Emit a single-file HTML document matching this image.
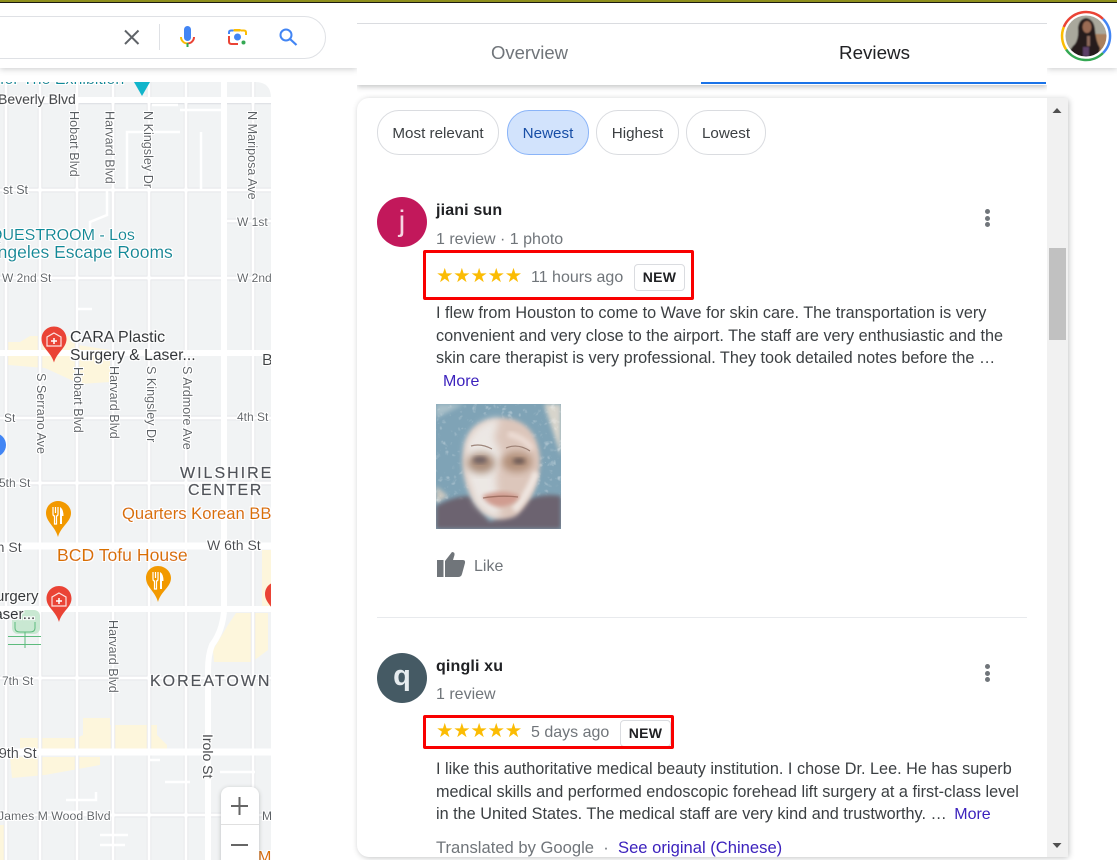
<!DOCTYPE html>
<html><head><meta charset="utf-8">
<style>
html,body{margin:0;padding:0;width:1117px;height:860px;overflow:hidden;background:#fff;font-family:"Liberation Sans",Arial,sans-serif}
#r{position:absolute;left:0;top:0;width:1117px;height:860px;overflow:hidden;background:#fff}
.a{position:absolute;white-space:nowrap}
.chip{position:absolute;top:110px;height:43px;line-height:45px;border:1px solid #dadce0;border-radius:22px;text-align:center;font-size:15.200px;color:#3c4043;background:#fff}
.t{position:absolute;left:436px;font-size:16px;color:#3c4043;white-space:nowrap;line-height:20px}
.g{color:#70757a}
.l{color:#3c22bd}
.st{color:#fbbc04}
.new{position:absolute;background:#fff;border:1px solid #dadce0;border-radius:4px;font-size:14px;font-weight:bold;color:#202124;text-align:center;letter-spacing:.3px}
.red{position:absolute;border:3.500px solid #f90000;border-radius:2px;box-sizing:border-box}
.dots i{position:absolute;left:0;width:5px;height:5px;border-radius:50%;background:#70757a}
svg text{font-family:"Liberation Sans",Arial,sans-serif}
</style></head><body><div id="r">

<!-- header shadow -->
<div class="a" style="left:0;top:0;width:357px;height:68px;background:#fff;box-shadow:0 1px 6px rgba(60,64,67,.28);clip-path:inset(0 0 -10px 0)"></div>
<div class="a" style="left:1047px;top:0;width:70px;height:68px;background:#fff;box-shadow:0 1px 6px rgba(60,64,67,.28);clip-path:inset(0 0 -10px 0)"></div>

<!-- search box -->
<div class="a" style="left:-30px;top:16px;width:354px;height:41px;border:1px solid #dfe1e5;border-radius:22px;background:#fff"></div>
<svg class="a" style="left:120px;top:24px" width="210" height="26" viewBox="120 24 210 26">
 <path d="M125 30.500 L138.500 44 M138.500 30.500 L125 44" stroke="#5f6368" stroke-width="2" fill="none"/>
 <rect x="159" y="24" width="1" height="26" fill="#dfe1e5"/>
 <rect x="184" y="26" width="7" height="15" rx="3.500" fill="#4285f4"/>
 <path d="M181 37 A6.500 6.500 0 0 0 187.500 43.500" stroke="#fbbc04" stroke-width="2" fill="none"/>
 <path d="M187.500 43.500 A6.500 6.500 0 0 0 194 37" stroke="#ea4335" stroke-width="2" fill="none"/>
 <rect x="186.500" y="43" width="2" height="4" fill="#34a853"/>
 <circle cx="237.500" cy="37" r="3.500" fill="#4285f4"/>
 <circle cx="243.500" cy="42.500" r="2" fill="#34a853"/>
 <path d="M229 34 V32.500 Q229 30.500 231 30.500 H233.500" stroke="#4285f4" stroke-width="2" fill="none"/>
 <path d="M241 30.500 H244 Q246 30.500 246 32.500 V35" stroke="#fbbc04" stroke-width="2" fill="none"/>
 <path d="M229 36 V41.500 Q229 44 231.500 44 H238" stroke="#ea4335" stroke-width="2" fill="none"/>
 <rect x="233.500" y="29" width="7.500" height="2.500" rx="1" fill="#fbbc04"/>
 <circle cx="286" cy="35" r="5.500" stroke="#4285f4" stroke-width="2" fill="none"/>
 <path d="M290 39 L296.500 45" stroke="#4285f4" stroke-width="2.200" fill="none"/>
</svg>

<!-- map -->
<svg class="a" style="left:0;top:82px" width="271" height="778" viewBox="0 82 271 778">
 <defs>
  <clipPath id="mc"><path d="M0 82 H255 Q271 82 271 98 V860 H0 Z"/></clipPath>
  <filter id="h" x="-20%" y="-20%" width="140%" height="140%"><feMorphology operator="dilate" radius="1" in="SourceAlpha" result="d"/><feFlood flood-color="#fff"/><feComposite in2="d" operator="in"/><feMerge><feMergeNode/><feMergeNode in="SourceGraphic"/></feMerge></filter>
 </defs>
 <g clip-path="url(#mc)">
  <rect x="0" y="82" width="271" height="778" fill="#f1f3f4"/>
  <!-- yellow areas -->
  <g fill="#fdf6dc">
   <path d="M8 342 H20 L30 336 H72 L78 345 L110 350 L110 382 L80 384 L45 368 L8 365 Z"/>
   <path d="M213 650 L228 625 L236 613 H268 V650 L252 662 H214 Z"/>
   <path d="M262 550 H271 V610 H262 Z"/>
   <path d="M83 718 H110 V725 H157 V735 L167 745 V752 H20 V738 L77 738 L83 735 Z"/>
   <path d="M10 757 H100 V765 L45 775 L12 778 Z"/>
   <path d="M0 825 H4 V860 H0 Z"/>
  </g>
  <!-- roads: minor -->
  <g stroke="#e0e2e6" stroke-width="4.400" fill="none">
   <path d="M40 82V860M77 82V860M113 82V860M149 82V860M186 82V860M253 82V860M6 82V860"/>
   <path d="M0 190H271M226 221H271M0 278H271M0 418H271M0 483H271M0 678H271M0 815H271M0 102H271"/>
  </g>
  <g stroke="#fff" stroke-width="3" fill="none">
   <path d="M40 82V860M77 82V860M113 82V860M149 82V860M186 82V860M253 82V860M6 82V860"/>
   <path d="M0 190H271M226 221H271M0 278H271M0 418H271M0 483H271M0 678H271M0 815H271"/>
  </g>
  <g stroke="#fff" stroke-width="2.500" fill="none">
   <path d="M127 190V132H180M201 132V190M180 110H225M152 105H178"/>
   <path d="M107 190V215L90 222V240M66 800H96V792M100 845H125M100 835H128M165 782H190M150 760H160M220 772H255M60 812H100M77 309H92"/>
  </g>
  <!-- major roads -->
  <g stroke="#fff" fill="none">
   <path d="M0 100H271" stroke-width="6"/>
   <path d="M0 353H271" stroke-width="6"/>
   <path d="M0 546H271" stroke-width="7"/>
   <path d="M0 609H271" stroke-width="6"/>
   <path d="M0 752H271" stroke-width="7"/>
   <path d="M224 82V612" stroke-width="6"/>
   <path d="M224 612Q222 632 212 645Q208 655 208 670V860" stroke-width="6"/>
  </g>
  <!-- park -->
  <rect x="12" y="610" width="28" height="24" rx="6" fill="#c9e8d2"/>
  <path d="M15 622 V628 Q15 632 20 632 H30 Q35 632 35 628 V622" stroke="#5dbb7d" fill="none"/>
  <path d="M8 636.500H41M8 644.500H41M25 632V648" stroke="#5dbb7d" fill="none"/>
  <!-- top marker -->
  <path d="M134 82H150L142 96Z" fill="#12b5cb"/>
  <!-- blue dot -->
  <circle cx="-6" cy="445" r="12" fill="#4285f4"/>
  <!-- text -->
  <g filter="url(#h)">
   <text x="0" y="84" font-size="16" fill="#0d8b99">for The Exhibition</text>
   <g fill="#5a5e63" font-size="12">
    <text x="-2" y="104" font-size="14" fill="#46494d" stroke="#46494d" stroke-width=".2">Beverly Blvd</text>
    <text x="3" y="194" font-size="12.500">st St</text>
    <text x="237" y="226">W 1st</text>
    <text x="237" y="282">W 2nd</text>
    <text x="2" y="282">W 2nd St</text>
    <text x="237" y="421">4th St</text>
    <text x="4" y="422">St</text>
    <text x="-1" y="487">5th St</text>
    <text x="2" y="685">7th St</text>
    <text x="-2" y="820" font-size="12.300">James M Wood Blvd</text>
    <text x="262" y="820">M</text>
   </g>
   <g fill="#5a5e63" font-size="12.600">
    <text transform="translate(70,111) rotate(90)">Hobart Blvd</text>
    <text transform="translate(105.500,111) rotate(90)">Harvard Blvd</text>
    <text transform="translate(144,111) rotate(90)">N Kingsley Dr</text>
    <text transform="translate(248,111) rotate(90)">N Mariposa Ave</text>
    <text transform="translate(37,373) rotate(90)">S Serrano Ave</text>
    <text transform="translate(74,367) rotate(90)">Hobart Blvd</text>
    <text transform="translate(110,366) rotate(90)">Harvard Blvd</text>
    <text transform="translate(147,366) rotate(90)">S Kingsley Dr</text>
    <text transform="translate(183,366) rotate(90)">S Ardmore Ave</text>
    <text transform="translate(109,620) rotate(90)">Harvard Blvd</text>
   </g>
   <text transform="translate(203,734) rotate(90)" font-size="14" fill="#46494d" stroke="#46494d" stroke-width=".15">Irolo St</text>
   <g fill="#0d8b99" font-size="16">
    <text x="-10" y="240">QUESTROOM - Los</text>
    <text x="-14" y="258" font-size="17.500">Angeles Escape Rooms</text>
   </g>
   <g fill="#333639" font-size="15.700" stroke="#333639" stroke-width=".15">
    <text x="70" y="342" font-size="16">CARA Plastic</text>
    <text x="70" y="360">Surgery &amp; Laser...</text>
    <text x="-14" y="601" font-size="15">Surgery</text>
    <text x="-14" y="619" font-size="15">Laser...</text>
   </g>
   <text x="262" y="365" font-size="16" fill="#3c4043">B</text>
   <g fill="#50535a" font-size="16" letter-spacing="2" stroke="#50535a" stroke-width=".3">
    <text x="180" y="478">WILSHIRE</text>
    <text x="188" y="495" letter-spacing="1.500">CENTER</text>
    <text x="150" y="686">KOREATOWN</text>
   </g>
   <g fill="#d97000" stroke="#d97000" stroke-width=".1">
    <text x="122" y="519" font-size="16.600">Quarters Korean BBQ</text>
    <text x="57" y="561" font-size="17.600">BCD Tofu House</text>
    <text x="258" y="862" font-size="16">M</text>
   </g>
   <g fill="#46494d" font-size="14">
    <text x="207" y="550">W 6th St</text>
    <text x="-15" y="552">6th St</text>
    <text x="-19" y="758" font-size="14.500">W 9th St</text>
   </g>
  </g>
  <!-- pins -->
  <g id="pins">
   <path d="M54 326.500C47 326.500 41.500 332 41.500 339C41.500 348 51 352 54 362.500C57 352 66.500 348 66.500 339C66.500 332 61 326.500 54 326.500Z" fill="#ea4335"/>
   <path d="M54 333L61 337V346H47V337Z" fill="none" stroke="#fff" stroke-opacity=".85" stroke-width="1.200"/>
   <path d="M54 338V344M51 341H57" stroke="#fff" stroke-width="1.500"/>
   <path d="M59 586C52 586 46.500 591.500 46.500 598.500C46.500 607.500 56 611 59 622C62 611 71.500 607.500 71.500 598.500C71.500 591.500 66 586 59 586Z" fill="#ea4335"/>
   <path d="M59 593L66 597V606H52V597Z" fill="none" stroke="#fff" stroke-opacity=".85" stroke-width="1.200"/>
   <path d="M59 598V604M56 601H62" stroke="#fff" stroke-width="1.500"/>
   <path d="M58 501C51 501 46 506.500 46 513C46 522 55 526 58 537C61 526 71 522 71 513C71 506.500 65 501 58 501Z" fill="#f29900"/>
   <path d="M53 507V514Q53 516 54.500 516V524H56.500V516Q58 516 58 514V507M55.500 507V513" stroke="#fff" fill="none" stroke-width="1.200"/><path d="M60 507Q63.500 509 63.500 516H62V524H60Z" fill="#fff"/>
   <path d="M158 566C151 566 146 571.500 146 578C146 587 155 591 158 602C161 591 171 587 171 578C171 571.500 165 566 158 566Z" fill="#f29900"/>
   <path d="M153 572V579Q153 581 154.500 581V589H156.500V581Q158 581 158 579V572M155.500 572V578" stroke="#fff" fill="none" stroke-width="1.200"/><path d="M160 572Q163.500 574 163.500 581H162V589H160Z" fill="#fff"/>
   <path d="M277 582C270 582 265 587.500 265 594C265 603 274 607 277 618C280 607 290 603 290 594C290 587.500 284 582 277 582Z" fill="#ea4335"/>
  </g>
 </g>
</svg>
<!-- zoom control -->
<div class="a" style="left:221px;top:787px;width:38px;height:90px;background:#fff;border-radius:8px;box-shadow:0 1px 4px rgba(60,64,67,.3)"></div>
<div class="a" style="left:221px;top:824px;width:38px;height:1px;background:#e0e0e0"></div>
<svg class="a" style="left:221px;top:787px" width="38" height="73" viewBox="221 787 38 73"><path d="M231 806H248M239.500 797V815M231 845H248" stroke="#666" stroke-width="2" fill="none"/></svg>

<!-- tabs -->
<div class="a" style="left:357px;top:23px;width:690px;height:62px;background:#fff;border-top:1px solid #dadce0;box-sizing:border-box;box-shadow:0 2px 5px rgba(60,64,67,.3);clip-path:inset(0 0 -10px 0)"></div>
<div class="a" style="left:357px;top:42px;width:345px;text-align:center;font-size:18.500px;line-height:22px;color:#70757a">Overview</div>
<div class="a" style="left:702px;top:42px;width:345px;text-align:center;font-size:18.800px;line-height:22px;color:#202124">Reviews</div>
<div class="a" style="left:701px;top:82px;width:345px;height:2px;background:#1a73e8"></div>

<!-- avatar -->
<svg class="a" style="left:1060px;top:10px" width="52" height="52" viewBox="0 0 52 52">
 <defs><clipPath id="ac"><circle cx="26" cy="26" r="20.500"/></clipPath><filter id="ab"><feGaussianBlur stdDeviation=".8"/></filter></defs>
 <path d="M3.800 17 A24 24 0 0 1 43 9" stroke="#ea4335" stroke-width="2.500" fill="none"/>
 <path d="M43 9 A24 24 0 0 1 43 43" stroke="#4285f4" stroke-width="2.500" fill="none"/>
 <path d="M43 43 A24 24 0 0 1 6.100 39.400" stroke="#34a853" stroke-width="2.500" fill="none"/>
 <path d="M6.100 39.400 A24 24 0 0 1 3.800 17" stroke="#fbbc04" stroke-width="2.500" fill="none"/>
 <g clip-path="url(#ac)"><g filter="url(#ab)">
  <rect width="52" height="52" fill="#a9a89c"/>
  <path d="M34 24H48V48H34Z" fill="#a9805f"/>
  <path d="M26 8Q34 9 35 20Q36 32 40 38L38 50H6Q10 38 15 34Q19 28 18 18Q19 9 26 8Z" fill="#251c1c"/>
  <ellipse cx="27" cy="17" rx="4.500" ry="6" fill="#9a6a52"/>
  <rect x="23" y="37" width="6" height="9" fill="#5c4068"/>
  <rect x="27" y="26" width="3" height="10" fill="#8d6a5b"/>
 </g></g>
</svg>

<!-- card -->
<div class="a" style="left:357px;top:98px;width:711px;height:759px;background:#fff;border-radius:12px 4px 4px 12px;box-shadow:1px 1px 6px rgba(60,64,67,.3)"></div>
<!-- scrollbar -->
<div class="a" style="left:1047px;top:98px;width:21px;height:759px;background:#f1f1f1"></div>
<div class="a" style="left:1049px;top:248px;width:17px;height:92px;background:#c1c1c1"></div>
<svg class="a" style="left:1047px;top:98px" width="21" height="759" viewBox="0 0 21 759"><path d="M5.500 15H14.500L10 10Z" fill="#505050"/><path d="M5.500 745H14.500L10 750Z" fill="#505050"/></svg>

<!-- chips -->
<div class="chip" style="left:377px;width:120px">Most relevant</div>
<div class="chip" style="left:507px;width:80px;background:#d2e3fc;border-color:#8ab4f8;color:#174ea6">Newest</div>
<div class="chip" style="left:596px;width:81px">Highest</div>
<div class="chip" style="left:686px;width:78px">Lowest</div>

<!-- review 1 -->
<div class="a" style="left:377px;top:197px;width:50px;height:50px;border-radius:50%;background:#c2185b;color:#f6d5e2;font-size:30px;line-height:50px;text-align:center">j</div>
<div class="t" style="top:201px;font-weight:bold;color:#202124;letter-spacing:.15px">jiani sun</div>
<div class="t g" style="top:230px">1 review · 1 photo</div>
<div class="new" style="left:634px;top:264px;width:49px;height:25px;line-height:25px">NEW</div>
<div class="red" style="left:423px;top:250px;width:271px;height:50px"></div>
<div class="t st" style="top:267px;font-size:19.300px;line-height:20px;letter-spacing:-.1px">★★★★★</div>
<div class="t g" style="left:531px;top:268px">11 hours ago</div>
<div class="t" style="top:302px;line-height:22.600px;font-size:16.240px">I flew from Houston to come to Wave for skin care. The transportation is very<br>convenient and very close to the airport. The staff are very enthusiastic and the<br>skin care therapist is very professional. They took detailed notes before the …<br><span class="l" style="margin-left:7px;font-size:16px">More</span></div>

<!-- photo -->
<svg class="a" style="left:436px;top:404px" width="125" height="125" viewBox="0 0 125 125">
 <defs>
  <filter id="b2" x="-20%" y="-20%" width="140%" height="140%"><feGaussianBlur stdDeviation="2"/></filter>
  <filter id="b4" x="-30%" y="-30%" width="160%" height="160%"><feGaussianBlur stdDeviation="4"/></filter>
  <filter id="tx" x="0" y="0" width="100%" height="100%"><feTurbulence baseFrequency=".14" numOctaves="2" seed="7"/><feColorMatrix values="0 0 0 0 1 0 0 0 0 1 0 0 0 0 1 1.800 0 0 0 -.65"/><feComposite in2="SourceAlpha" operator="in"/></filter>
  <clipPath id="pc"><rect width="125" height="125"/></clipPath>
 </defs>
 <g clip-path="url(#pc)">
 <rect width="125" height="125" fill="#7fa3b6"/>
 <path d="M108 0H125V52Z" fill="#d8d5cc" filter="url(#b2)"/>
 <path d="M0 0H28L0 14Z" fill="#a9c0c9" filter="url(#b2)"/>
 <path d="M0 82L12 92L0 100Z" fill="#c9c7c0" filter="url(#b2)"/>
 <rect width="125" height="100" filter="url(#tx)" opacity=".55"/>
 <path d="M0 125V102Q18 92 34 92L54 118L82 100Q104 88 125 92V125Z" fill="#6c636f" filter="url(#b2)"/>
 <path d="M27 60Q25 16 64 14Q100 14 104 54Q104 90 80 112Q62 120 46 108Q29 90 27 60Z" fill="#dcc6bb" filter="url(#b2)"/>
 <path d="M64 14Q40 16 30 40L30 70L40 100L54 112L64 114L60 74L66 50L58 34Z" fill="#efeeec" opacity=".85" filter="url(#b4)"/>
 <path d="M72 30Q90 34 96 46" stroke="#ecdcd4" stroke-width="6" fill="none" filter="url(#b2)"/>
 <path d="M78 106Q94 88 100 68" stroke="#efe6e1" stroke-width="7" fill="none" filter="url(#b2)"/>
 <ellipse cx="45" cy="59" rx="14" ry="10" fill="#a98b78" filter="url(#b4)"/>
 <ellipse cx="81" cy="58" rx="15" ry="10" fill="#b08e78" filter="url(#b4)"/>
 <ellipse cx="44" cy="56" rx="7" ry="3.500" fill="#716264" filter="url(#b2)"/>
 <ellipse cx="83" cy="57" rx="6" ry="3" fill="#6b5855" filter="url(#b2)"/>
 <path d="M46 92Q64 84 84 92Q78 102 64 103Q52 102 46 92Z" fill="#d09c90" filter="url(#b2)"/>
 <path d="M47 94Q64 91 82 93" stroke="#96685a" fill="none" stroke-width="1.300" opacity=".8"/>
 <path d="M35 42Q45 39 56 45M70 44Q82 39 94 47" stroke="#8a6d60" fill="none" stroke-width="1.200" opacity=".8"/>
 </g>
</svg>

<!-- like -->
<svg class="a" style="left:436px;top:551px" width="30" height="27" viewBox="0 0 30 27">
 <rect x="1" y="9" width="6.500" height="17" fill="#70757a"/>
 <path d="M9 10L16 1Q19 1 18.500 4L17 9H27Q29.500 9 29 12L26 23Q25.300 26 22 26H9Z" fill="#70757a"/>
</svg>
<div class="t g" style="left:474px;top:557px">Like</div>

<div class="a" style="left:377px;top:617px;width:650px;height:1px;background:#e8eaed"></div>

<!-- review 2 -->
<div class="a" style="left:377px;top:653px;width:50px;height:50px;border-radius:50%;background:#455a64;color:#e6ecef;font-size:29px;font-weight:bold;line-height:46px;text-align:center">q</div>
<div class="t" style="top:657px;font-weight:bold;color:#202124;letter-spacing:.15px">qingli xu</div>
<div class="t g" style="top:685px">1 review</div>
<div class="new" style="left:620px;top:720px;width:49px;height:25px;line-height:25px">NEW</div>
<div class="red" style="left:423px;top:715px;width:251px;height:34px"></div>
<div class="t st" style="top:722px;font-size:19.300px;letter-spacing:-.1px">★★★★★</div>
<div class="t g" style="left:531px;top:723px">5 days ago</div>
<div class="t" style="top:758px;line-height:22.600px;font-size:16.240px">I like this authoritative medical beauty institution. I chose Dr. Lee. He has superb<br>medical skills and performed endoscopic forehead lift surgery at a first-class level<br>in the United States. The medical staff are very kind and trustworthy. … <span class="l" style="margin-left:3px;font-size:16px">More</span></div>
<div class="t g" style="top:838px;font-size:16.600px">Translated by Google &nbsp;·&nbsp; <span class="l">See original (Chinese)</span></div>

<!-- dots -->
<div class="a dots" style="left:985px;top:209px;width:5px;height:20px"><i style="top:0"></i><i style="top:6.500px"></i><i style="top:13px"></i></div>
<div class="a dots" style="left:985px;top:664px;width:5px;height:20px"><i style="top:0"></i><i style="top:6.500px"></i><i style="top:13px"></i></div>

<!-- top strip -->
<div class="a" style="left:0;top:0;width:1117px;height:2px;background:#8e8f1c"></div>
<div class="a" style="left:0;top:2px;width:1117px;height:1px;background:#1a1a10"></div>

</div></body></html>
